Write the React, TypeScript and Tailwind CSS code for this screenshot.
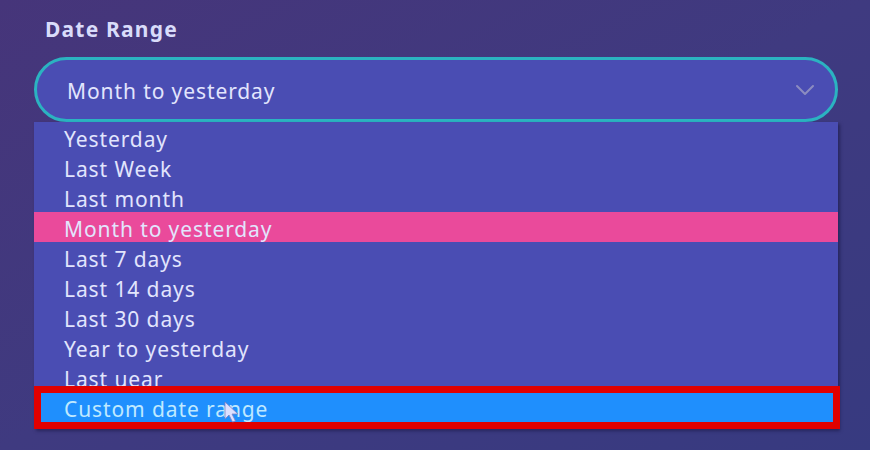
import { ChevronDown } from "lucide-react";

const options = [
  "Yesterday",
  "Last Week",
  "Last month",
  "Month to yesterday",
  "Last 7 days",
  "Last 14 days",
  "Last 30 days",
  "Year to yesterday",
  "Last uear",
];

export default function App() {
  return (
    <div
      className="w-[870px] h-[450px] overflow-hidden bg-gradient-to-br from-[#46357a] via-[#3f3a80] to-[#373a80] pl-[34px] pr-[32px]"
      style={{ fontFamily: "'Noto Sans', sans-serif" }}
    >
      <div className="pt-[16px] pl-[11px] text-[21px] font-bold text-[#d9dcfa] leading-[26px] tracking-[1.2px]">Date Range</div>

      <div className="mt-[15px] h-[65px] rounded-full border-[3px] border-[#2bb3c1] bg-[#4a4db3] flex items-center justify-between pl-[30px] pr-[14px]">
        <span className="pt-[4px] text-[21px] text-[#e2e5fd] tracking-[0.9px]">Month to yesterday</span>
        <ChevronDown className="w-[32px] h-[32px] text-[#8c8cc0]" strokeWidth={1.5} />
      </div>

      <div className="relative bg-[#4a4db3] pb-[7px] shadow-[2px_2px_3px_rgba(20,20,60,0.5)]">
        {options.map((o) => (
          <div
            key={o}
            className={`h-[30px] flex items-center pl-[30px] pt-[5px] text-[21px] text-[#e2e5fd] tracking-[0.9px] ${
              o === "Month to yesterday" ? "bg-[#ea4a9b]" : ""
            }`}
          >
            {o}
          </div>
        ))}
        <div className="relative h-[30px]">
          <div className="absolute left-0 right-[-2px] top-[-6px] bottom-[-7px] border-[7px] border-[#e10000] bg-[#1f8ffd] flex items-center pl-[23px] pt-[4px] text-[21px] text-[#bfe9ff] tracking-[0.9px]">
            Custom date range
          </div>
          <svg className="absolute left-[190px] top-[9px]" width="17" height="23" viewBox="0 0 17 23">
            <path d="M1 1 L1 18 L5 14 L8.5 21 L11.5 20 L8 13 L14 13 Z" fill="#dde0ff" stroke="#8080c0" strokeWidth="0.8" />
          </svg>
        </div>
      </div>
    </div>
  );
}
